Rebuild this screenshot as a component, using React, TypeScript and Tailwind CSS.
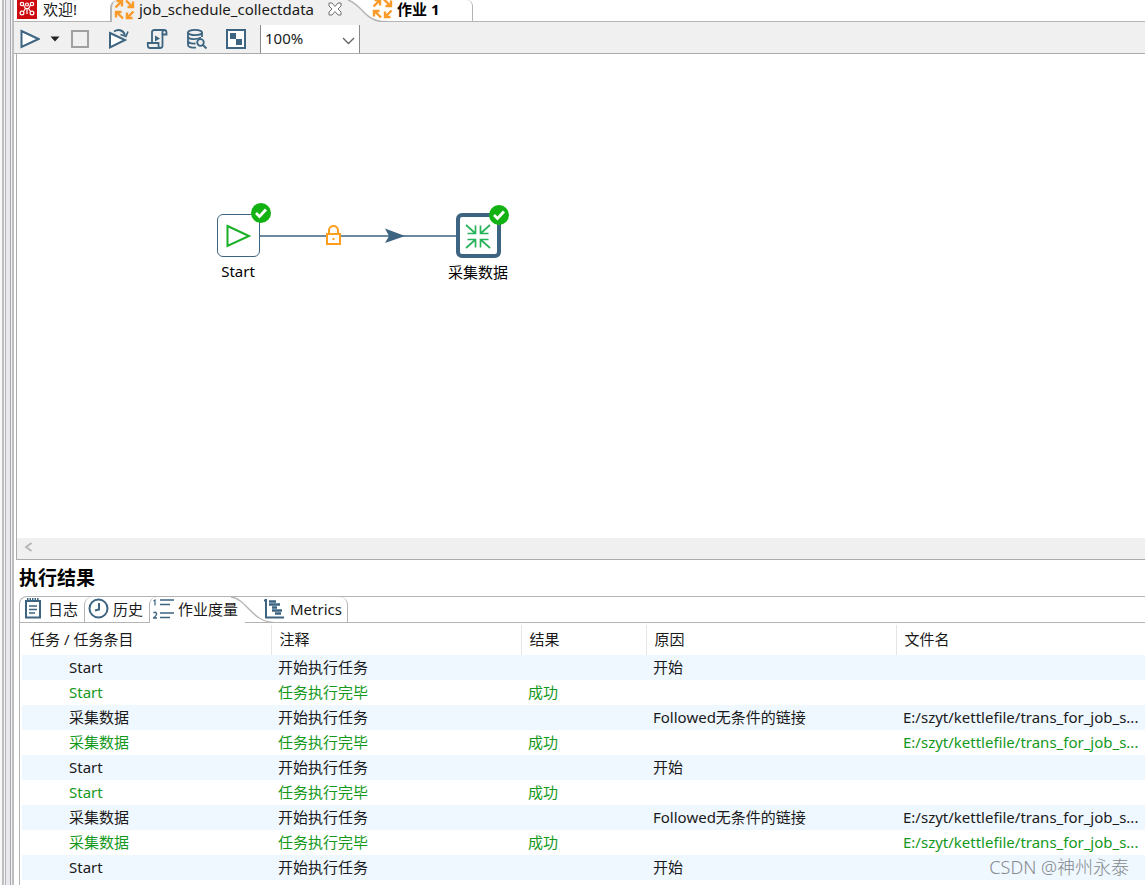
import type { ReactNode } from 'react';

type Row = {
  entry: string;
  comment: string;
  result?: string;
  reason?: string;
  file?: string;
};

const FILE_NAME = 'E:/szyt/kettlefile/trans_for_job_s...';

const cycle: Row[] = [
  { entry: 'Start', comment: '开始执行任务', reason: '开始' },
  { entry: 'Start', comment: '任务执行完毕', result: '成功' },
  { entry: '采集数据', comment: '开始执行任务', reason: 'Followed无条件的链接', file: FILE_NAME },
  { entry: '采集数据', comment: '任务执行完毕', result: '成功', file: FILE_NAME },
];

const rows: Row[] = [...cycle, ...cycle, cycle[0]];

export default function App() {
  return (
    <div className="relative flex h-screen overflow-hidden bg-white font-['Noto_Sans','Noto_Sans_CJK_SC',sans-serif] text-[15px] leading-5 text-[#1a1a1a]">
      <Gutter />
      <main className="flex min-w-0 flex-1 flex-col">
        <EditorTabs />
        <Toolbar />
        <Canvas />
        <Results />
      </main>
      <div className="absolute right-4 bottom-2 text-[18px] font-light text-[#85898e]">
        CSDN @神州永泰
      </div>
    </div>
  );
}

function Gutter() {
  return (
    <div className="flex shrink-0 bg-[#f4f4f4]">
      <div className="w-0.5 bg-[#f8f8f8]" />
      <div className="w-0.5 bg-[#bebebe]" />
      <div className="w-px" />
      <div className="w-px bg-[#b4b4bc]" />
      <div className="w-1 bg-[#e9e9ed]" />
      <div className="w-px bg-[#a8a8b0]" />
      <div className="w-px" />
      <div className="w-0.5 bg-[#bebebe]" />
    </div>
  );
}

function EditorTabs() {
  return (
    <div role="tablist" className="flex h-[22px] shrink-0">
      <button
        role="tab"
        className="flex w-24 items-center gap-1.5 border-b border-[#b4b4b4] pb-1 pl-[3px]"
      >
        <WelcomeIcon />
        欢迎!
      </button>
      <div className="relative flex w-[235px] items-center rounded-tl-lg border-l-2 border-[#b4b4b4] bg-[#f0f0f0] pb-1 pl-0.5">
        <button role="tab" aria-selected="true" className="flex items-center gap-1">
          <JobIcon />
          job_schedule_collectdata
        </button>
        <button aria-label="关闭" className="ml-3.5">
          <CloseIcon />
        </button>
        <svg className="absolute top-0 left-full" width="42" height="22" viewBox="0 0 42 22">
          <path d="M0 0H5C16 5 20 20 36 21.5H42V22H0Z" fill="#f0f0f0" />
          <path d="M3 0C16 4 20 20 36 21.5H42" fill="none" stroke="#b4b4b4" strokeWidth="1.4" />
        </svg>
      </div>
      <button
        role="tab"
        className="flex w-32 items-center gap-1 rounded-tr-md border-r border-b border-[#b4b4b4] pb-1 pl-[27px] font-bold text-black"
      >
        <JobIcon />
        作业 1
      </button>
      <div className="flex-1 border-b border-[#b4b4b4]" />
    </div>
  );
}

function Toolbar() {
  return (
    <div className="flex h-8 shrink-0 items-center border-b border-[#acacac] bg-[#f0f0f0] pt-0.5 pl-1.5 text-[#3d6480]">
      <button aria-label="运行">
        <svg width="20" height="20" viewBox="0 0 20 20">
          <path d="M1.5 2L18.5 10L1.5 18Z" fill="#fff" stroke="currentColor" strokeWidth="2" />
        </svg>
      </button>
      <button aria-label="运行选项" className="ml-2.5">
        <svg width="10" height="6" viewBox="0 0 10 6">
          <path d="M0.5 0.5H9.5L5 5.5Z" fill="#222" />
        </svg>
      </button>
      <button aria-label="停止" className="ml-2.5">
        <svg width="20" height="20" viewBox="0 0 20 20">
          <rect x="2" y="2" width="16" height="16" fill="#f0f0f0" stroke="#a0a0a0" strokeWidth="2" />
        </svg>
      </button>
      <button aria-label="重放" className="ml-[18px]">
        <svg width="22" height="22" viewBox="0 0 22 22" fill="none" stroke="currentColor" strokeWidth="2">
          <path d="M2 5L17 12L2 19.5Z" fill="#fff" />
          <path d="M6 3.5C10 1 15 1.5 17 7" />
          <path d="M12.5 6.5L18 8.5L20 3.5" strokeWidth="1.6" />
        </svg>
      </button>
      <button aria-label="SQL 脚本" className="ml-4">
        <svg width="22" height="22" viewBox="0 0 22 22" fill="none" stroke="currentColor" strokeWidth="1.8">
          <path d="M6 14.5V4Q6 2 8.5 2H18Q20.5 2 20.5 4.5V6.5H16.5V17.5Q16.5 20 14 20H4Q1.8 20 1.8 17.5V15H12.5V17.5Q12.5 20 14.5 20" />
          <path d="M16.5 6.5V4Q16.5 2 18.5 2" />
          <path d="M9 7.5L14 10.5L9 13.5Z" fill="currentColor" stroke="none" />
        </svg>
      </button>
      <button aria-label="浏览数据库" className="ml-[18px]">
        <svg width="22" height="22" viewBox="0 0 22 22" fill="none" stroke="currentColor" strokeWidth="1.8">
          <ellipse cx="9" cy="4.5" rx="7" ry="2.7" />
          <path d="M2 4.5V17C2 18.8 5 19.8 10 19.6" />
          <path d="M16 4.5V9" />
          <path d="M2 9C3 11.5 10 12 15 9.5" />
          <path d="M2 13.5C3 15.2 6 15.8 9.5 15.5" />
          <circle cx="14.5" cy="14.5" r="3.3" />
          <path d="M17 17L20.5 20.5" />
        </svg>
      </button>
      <button aria-label="显示结果面板" className="ml-[18px]">
        <svg width="20" height="20" viewBox="0 0 20 20">
          <rect x="1" y="1" width="18" height="18" fill="#fff" stroke="currentColor" strokeWidth="2" />
          <path d="M4 4H10V10H4ZM10 10H16V16H10Z" fill="currentColor" />
        </svg>
      </button>
      <label className="relative ml-3.5 flex h-7 w-[100px] self-end border-x border-[#8a8a8a] bg-white">
        <select
          aria-label="缩放"
          className="w-full appearance-none bg-transparent px-1 pb-0.5 text-[15px] text-[#1a1a1a] outline-none"
        >
          <option>100%</option>
        </select>
        <svg
          className="pointer-events-none absolute top-3 right-1"
          width="13"
          height="8"
          viewBox="0 0 13 8"
        >
          <path d="M1 1L6.5 6.5L12 1" fill="none" stroke="#666" strokeWidth="1.4" />
        </svg>
      </label>
    </div>
  );
}

function Canvas() {
  return (
    <section className="ml-0.5 flex h-[506px] shrink-0 flex-col border-b border-l border-[#acacac]">
      <div className="relative flex-1">
        {/* hop between the two entries */}
        <svg className="absolute top-[170px] left-[243px]" width="197" height="24" viewBox="0 0 197 24">
          <path d="M0 12H197" stroke="#3d6480" strokeWidth="1.4" />
          <path d="M125 4.5L145 12L125 19L129 12Z" fill="#3d6480" />
          <rect x="67" y="10" width="13" height="10" fill="#fff" stroke="#ff9d1c" strokeWidth="2" />
          <path d="M69 10V6.500C69 0.500 78 0.500 78 6.500V10" fill="none" stroke="#ff9d1c" strokeWidth="2" />
          <rect x="72.500" y="14" width="2" height="2" fill="#ff9d1c" />
        </svg>
        <Entry label="Start" place="left-[181px] top-[160px]" box="border border-[#3d6480] size-[43px]">
          <svg width="28" height="28" viewBox="0 0 28 28">
            <path d="M3.500 4L25 14L3.500 24Z" fill="none" stroke="#17b026" strokeWidth="2" />
          </svg>
        </Entry>
        <Entry label="采集数据" place="left-[421px] top-[159px]" box="border-4 border-[#3d6480] size-[45px]">
          <svg width="28" height="28" viewBox="0 0 28 28" fill="none" stroke="#27b35a" strokeWidth="1.7">
            <path d="M2 3L11.500 11.500M11.500 3.500V11.500H3.500" />
            <path d="M26 3L16.500 11.500M16.500 3.500V11.500H24.500" />
            <path d="M2 26L11.500 17.500M11.500 25.500V17.500H3.500" />
            <path d="M26 26L16.500 17.500M16.500 25.500V17.500H24.500" />
          </svg>
        </Entry>
      </div>
      <div className="flex h-[21px] items-center bg-[#f0f0f0] pb-1 pl-[7px]">
        <button aria-label="向左滚动">
          <svg width="9" height="10" viewBox="0 0 9 10">
            <path d="M7.500 1L2 5L7.500 9" fill="none" stroke="#b4b4b4" strokeWidth="1.800" />
          </svg>
        </button>
      </div>
    </section>
  );
}

type EntryProps = {
  label: string;
  place: string;
  box: string;
  children: ReactNode;
};

function Entry({ label, place, box, children }: EntryProps) {
  return (
    <div className={`absolute flex w-20 flex-col items-center gap-1 text-black ${place}`}>
      <div className={`relative flex items-center justify-center rounded-md bg-white ${box}`}>
        {children}
        <svg className="absolute -top-3 -right-3" width="20" height="20" viewBox="0 0 20 20">
          <circle cx="10" cy="10" r="10" fill="#12b212" />
          <path d="M5 10L8.500 13.500L15 6.500" fill="none" stroke="#fff" strokeWidth="2.800" />
        </svg>
      </div>
      <span>{label}</span>
    </div>
  );
}

function Results() {
  return (
    <section className="flex min-h-0 flex-1 flex-col overflow-hidden pl-[5px]">
      <h2 className="h-9 shrink-0 text-[19px] leading-9 font-bold text-black">执行结果</h2>
      <div role="tablist" className="flex h-[27px] shrink-0 rounded-tl-lg border-t border-l border-[#b4b4b4]">
        <button role="tab" className="flex w-16 items-center gap-1.5 border-b border-[#b4b4b4] pb-0.5 pl-1">
          <LogIcon />
          日志
        </button>
        <button
          role="tab"
          className="flex w-[65px] items-center gap-1 rounded-tl-lg border-b border-l border-[#b4b4b4] pb-0.5 pl-[3px]"
        >
          <HistoryIcon />
          历史
        </button>
        <div className="relative w-24 rounded-tl-lg border-l border-[#b4b4b4] pl-[3px]">
          <button
            role="tab"
            aria-selected="true"
            className="flex h-full items-center gap-1 pb-0.5 whitespace-nowrap"
          >
            <MetricsListIcon />
            作业度量
          </button>
          <svg className="absolute top-0 left-[81px]" width="42" height="26" viewBox="0 0 42 26">
            <path d="M0 0C16 2 20 24 42 25.500" fill="none" stroke="#b4b4b4" strokeWidth="1.400" />
          </svg>
        </div>
        <button
          role="tab"
          className="flex w-[103px] items-center gap-1.5 rounded-tr-lg border-r border-b border-[#b4b4b4] pb-0.5 pl-[19px]"
        >
          <ChartIcon />
          Metrics
        </button>
        <div className="flex-1 border-b border-[#b4b4b4]" />
      </div>
      <div className="flex-1 border-l border-[#b4b4b4] pt-0.5 pl-0.5">
        <table className="w-full table-fixed border-collapse text-left whitespace-nowrap">
          <colgroup>
            <col className="w-[249px]" />
            <col className="w-[250px]" />
            <col className="w-[125px]" />
            <col className="w-[250px]" />
            <col />
          </colgroup>
          <thead>
            <tr className="h-[30px] [&>th]:border-r [&>th]:border-[#e5e5e5] [&>th]:px-2 [&>th]:pt-0 [&>th]:pb-0.5 [&>th]:font-normal [&>th:last-child]:border-r-0">
              <th>任务 / 任务条目</th>
              <th>注释</th>
              <th>结果</th>
              <th>原因</th>
              <th>文件名</th>
            </tr>
          </thead>
          <tbody>
            {rows.map((row, i) => (
              <tr
                key={i}
                className={`h-[25px] [&>td]:pt-0 [&>td]:pb-0.5 [&>td]:pl-[7px] ${
                  i % 2 ? 'text-[#14991c]' : 'bg-[#eff7ff]'
                }`}
              >
                <td>
                  <span className="pl-10">{row.entry}</span>
                </td>
                <td>{row.comment}</td>
                <td>{row.result}</td>
                <td>{row.reason}</td>
                <td>{row.file}</td>
              </tr>
            ))}
          </tbody>
        </table>
      </div>
    </section>
  );
}

function WelcomeIcon() {
  return (
    <svg width="20" height="20" viewBox="0 0 20 20" fill="none" stroke="#fff" strokeWidth="1.200">
      <rect width="20" height="20" fill="#cc0a10" stroke="none" />
      <circle cx="5" cy="5" r="1.700" />
      <circle cx="15" cy="5" r="1.700" />
      <circle cx="5" cy="14" r="1.900" />
      <circle cx="15" cy="14" r="1.900" />
      <circle cx="10" cy="5.500" r="1.500" />
      <path d="M6.500 6L8.500 9.500L6.500 12.500M13.500 6L11.500 9.500L13.500 12.500M8.500 9.500H11.500M10 9.500V15" />
    </svg>
  );
}

function JobIcon() {
  return (
    <svg width="21" height="21" viewBox="0 0 21 21" fill="none" stroke="#fa9a28" strokeWidth="2.400">
      <path d="M1.500 8.500L7.500 2.500M2.500 2H8V7.500" />
      <path d="M12 1.500L18 7.500M19 2.500V8H13.500" />
      <path d="M19.500 12.500L13.500 18.500M18.500 19H13V13.500" />
      <path d="M9 19.500L3 13.500M2 18.500V13H7.500" />
    </svg>
  );
}

function CloseIcon() {
  return (
    <svg width="14" height="14" viewBox="0 0 14 14">
      <path
        d="M1 1H4L7 4.500L10 1H13V4L10 7L13 10V13H10L7 9.500L4 13H1V10L4 7L1 4Z"
        fill="#fff"
        stroke="#707070"
      />
    </svg>
  );
}

function LogIcon() {
  return (
    <svg width="18" height="21" viewBox="0 0 18 21" fill="none" stroke="#3d6480" strokeWidth="2">
      <path d="M2 3H16V19.500H2Z" />
      <path d="M3 1.500H15" strokeWidth="3" strokeDasharray="1.500 1" />
      <path d="M5 8H13M5 11.500H13M5 15H11" strokeWidth="1.500" />
    </svg>
  );
}

function HistoryIcon() {
  return (
    <svg width="21" height="21" viewBox="0 0 21 21" fill="none" stroke="#3d6480" strokeWidth="2">
      <circle cx="10.500" cy="10.500" r="9" />
      <path d="M11 5V11.500L7 12.500" />
    </svg>
  );
}

function MetricsListIcon() {
  return (
    <svg width="21" height="22" viewBox="0 0 21 22" fill="none" stroke="#3d6480" strokeWidth="1.500">
      <path d="M0.500 3L2 2V7.500" strokeWidth="1.200" />
      <path d="M0.500 15Q2 13.500 3.300 15T0.500 20H4" strokeWidth="1.300" />
      <path d="M7 2H21M7 6.500H17M7 15H21M7 19.500H17" strokeWidth="1.700" />
    </svg>
  );
}

function ChartIcon() {
  return (
    <svg width="20" height="20" viewBox="0 0 20 20" fill="none" stroke="#3d6480" strokeWidth="2">
      <path d="M2 0V18.500H20" />
      <path d="M0 1.500H3" />
      <path d="M5 2.500H12M5 5.500H16M8 8.500H13M8 11.500H18M11 14.500H17" strokeWidth="2.400" />
    </svg>
  );
}
